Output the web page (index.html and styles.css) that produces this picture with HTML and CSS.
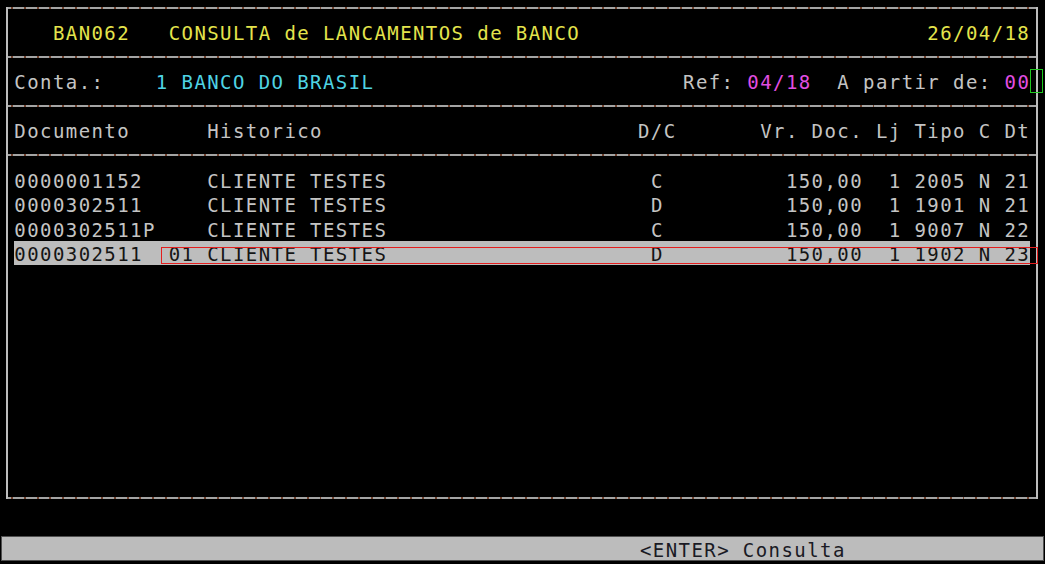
FILE: index.html
```html
<!DOCTYPE html>
<html lang="pt">
<head>
<meta charset="utf-8">
<title>BAN062 - Consulta de Lancamentos de Banco</title>
<link rel="stylesheet" href="styles.css">
</head>
<body>
<div class="term">
  <div class="frame">
    <div class="rule"></div>
    <div class="band">
      <div class="ln">   <span class="y">BAN062   CONSULTA de LANCAMENTOS de BANCO</span>                           <span class="y">26/04/18</span></div>
    </div>
    <div class="rule"></div>
    <div class="band">
      <div class="ln">Conta.:    <span class="cy">1 BANCO DO BRASIL</span>                        Ref: <span class="mg">04/18</span>  A partir de: <span class="mg">00</span><span class="cur"></span></div>
    </div>
    <div class="rule"></div>
    <div class="band">
      <div class="ln">Documento      Historico                        <span class="dc">D/C</span>      Vr. Doc. Lj Tipo C Dt</div>
    </div>
    <div class="rule"></div>
    <div class="data">
      <div class="ln">0000001152     CLIENTE TESTES                   <span class="dc">C</span>        150,00  1 2005 N 21</div>
      <div class="ln">0000302511     CLIENTE TESTES                   <span class="dc">D</span>        150,00  1 1901 N 21</div>
      <div class="ln">0000302511P    CLIENTE TESTES                   <span class="dc">C</span>        150,00  1 9007 N 22</div>
      <div class="ln hl"><span class="doc">0000302511</span><span class="sel">01 CLIENTE TESTES                   <span class="dc">D</span>        150,00  1 1902 N 23</span></div>
    </div>
    <div class="rule"></div>
  </div>
  <div class="status">&lt;ENTER&gt; Consulta</div>
</div>
</body>
</html>
```
FILE: styles.css
```css
:root {
  --w: 12.86px;
  --h: 24.55px;
}

* {
  box-sizing: border-box;
}

html,
body {
  margin: 0;
  background: #000;
}

body {
  width: 1045px;
  height: 564px;
  overflow: hidden;
  font-family: "DejaVu Sans Mono", "Liberation Mono", monospace;
  font-size: 19px;
  letter-spacing: 1.42px;
  color: #c4c4c4;
}

.term {
  padding-top: 6.5px;
}

.frame {
  margin-left: 6px;
  width: 1032px;
  border-left: 2px solid #bdbdbd;
  border-right: 2px solid #bdbdbd;
}

.rule {
  height: 2px;
  background: repeating-linear-gradient(90deg,
      #a4a4a4 0 2.9px,
      #70402c 2.9px 4.86px,
      #a4a4a4 4.86px 12.86px);
}

.band {
  padding: 11.275px 0;
}

.data {
  height: 341.7px;
  padding-top: 11.275px;
}

.ln {
  height: var(--h);
  line-height: var(--h);
  padding-top: 1.5px;
  white-space: pre;
  margin-left: 6.36px;
  width: calc(79 * var(--w));
}

.y {
  color: #e4e44c;
}

.cy {
  color: #4fd4e4;
}

.mg {
  color: #e24ee2;
}

.dc {
  display: inline-block;
  width: calc(4 * var(--w));
  text-align: center;
}

.cur {
  display: inline-block;
  width: var(--w);
  height: var(--h);
  margin-top: -1.5px;
  border: 1.5px solid #1fc81f;
  vertical-align: top;
}

.hl {
  display: flex;
  background: #bdbdbd;
  color: #151515;
}

.doc {
  width: 146.64px;
  flex: none;
}

.sel {
  position: relative;
  flex: 1;
  margin-right: -7.7px;
  padding-left: 7.68px;
}

.sel::after {
  content: "";
  position: absolute;
  left: 0;
  right: 0;
  top: 4.775px;
  bottom: 1.275px;
  border: 1px solid #e41e1e;
}

.status {
  margin: 37px 1px 0;
  height: 25px;
  border: 1px solid #505050;
  background: #bcbcbc;
  color: #1a1a24;
  line-height: 26px;
  padding-left: 638px;
  white-space: pre;
  overflow: hidden;
}
```
